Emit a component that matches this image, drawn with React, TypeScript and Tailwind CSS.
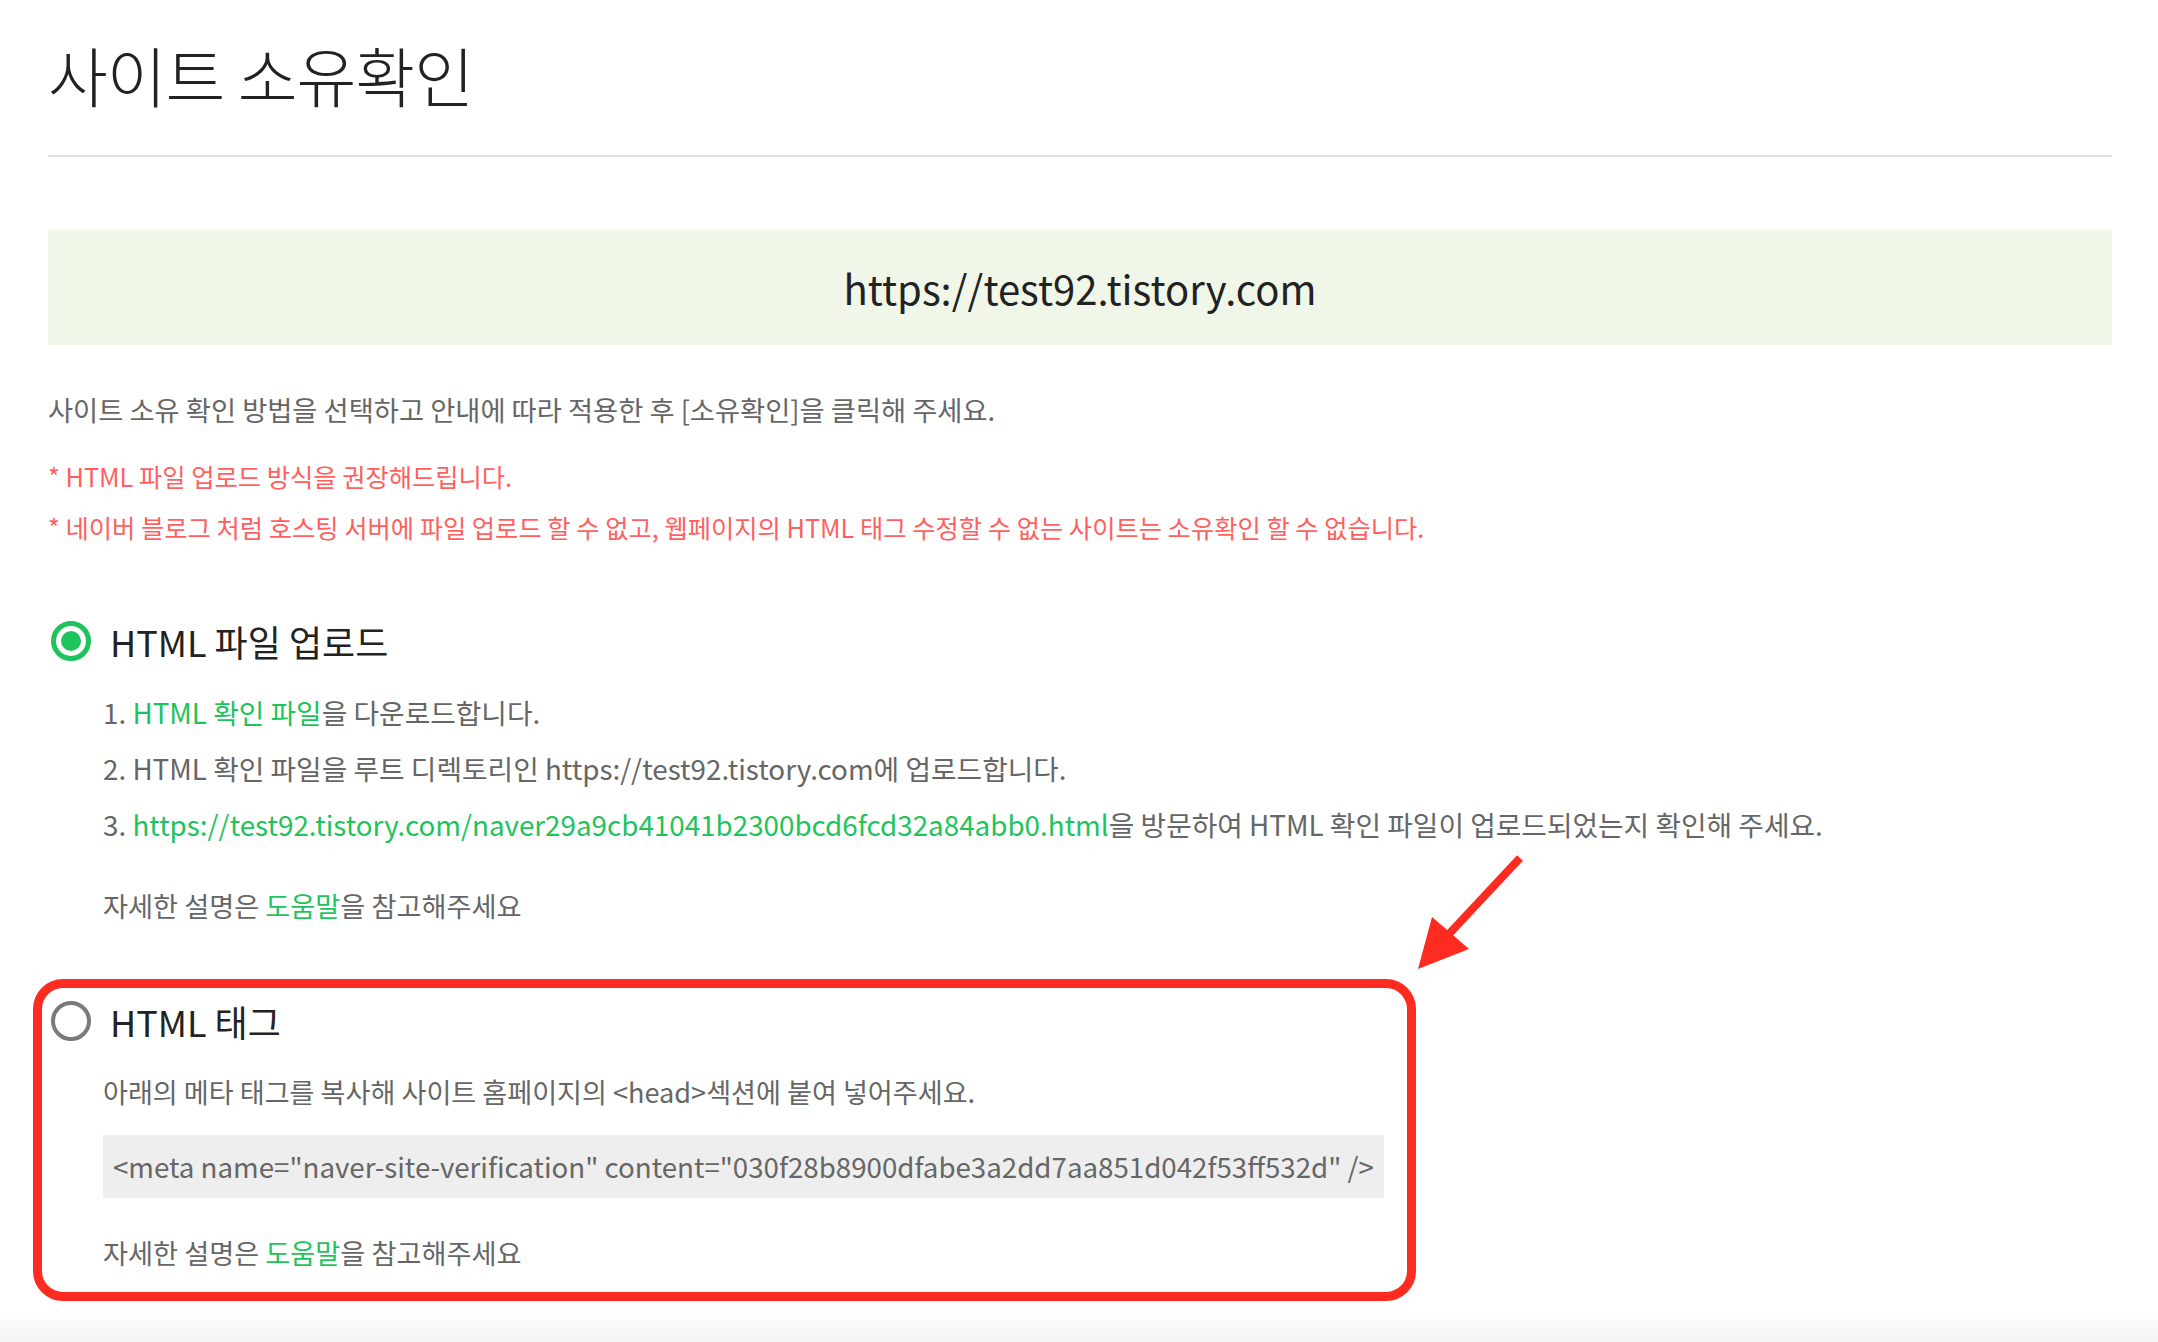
import React from 'react'

const font = { fontFamily: '"Noto Sans CJK KR", "Noto Sans", sans-serif' }

function Radio({ checked }: { checked?: boolean }) {
    if (checked) {
        return (
            <span className="flex h-[40px] w-[40px] shrink-0 items-center justify-center rounded-full border-[5px] border-[#1fc35c]">
                <span className="h-[20px] w-[20px] rounded-full bg-[#1fc35c]" />
            </span>
        )
    }
    return <span className="h-[40px] w-[40px] shrink-0 rounded-full border-[4px] border-[#7a7a7a]" />
}

function Help() {
    return (
        <p className="h-[40px] text-[27.2px] leading-[40px] text-[#666]">
            자세한 설명은 <span className="text-[#1fc35c]">도움말</span>을 참고해주세요
        </p>
    )
}

export default function App() {
    return (
        <div className="relative min-h-[1342px] bg-white" style={font}>
            <div className="px-[48px] pr-[46px]">
                <div className="border-b-2 border-[#e2e2e2] pt-[34px] pb-[41px]">
                    <h1 className="h-[80px] text-[65px] font-light leading-[80px] tracking-[-1px] text-[#222]">사이트 소유확인</h1>
                </div>

                <div className="mt-[73px] flex h-[115px] items-center justify-center bg-[#f0f7e8]">
                    <span className="text-[40px] text-[#222]">https://test92.tistory.com</span>
                </div>

                <p className="mt-[44px] h-[40px] text-[27.3px] leading-[40px] text-[#666]">
                    사이트 소유 확인 방법을 선택하고 안내에 따라 적용한 후 [소유확인]을 클릭해 주세요.
                </p>

                <div className="mt-[22px] text-[25.3px] leading-[51px] text-[#ff5f5f]">
                    <p>* HTML 파일 업로드 방식을 권장해드립니다.</p>
                    <p>* 네이버 블로그 처럼 호스팅 서버에 파일 업로드 할 수 없고, 웹페이지의 HTML 태그 수정할 수 없는 사이트는 소유확인 할 수 없습니다.</p>
                </div>

                <section className="mt-[63px]">
                    <div className="ml-[3px] flex h-[50px] items-center gap-[19px]">
                        <Radio checked />
                        <span className="text-[36px] text-[#222]">HTML 파일 업로드</span>
                    </div>
                    <ol className="mt-[18px] pl-[55px] text-[27.8px] leading-[56px] text-[#666]">
                        <li>
                            1. <span className="text-[#1fc35c]">HTML 확인 파일</span>을 다운로드합니다.
                        </li>
                        <li>2. HTML 확인 파일을 루트 디렉토리인 https://test92.tistory.com에 업로드합니다.</li>
                        <li>
                            3. <span className="text-[#1fc35c]">https://test92.tistory.com/naver29a9cb41041b2300bcd6fcd32a84abb0.html</span>을 방문하여 HTML 확인 파일이 업로드되었는지 확인해 주세요.
                        </li>
                    </ol>
                    <div className="mt-[33px] pl-[55px]">
                        <Help />
                    </div>
                </section>

                <section className="ml-[-15px] mt-[54px] w-[1383px] rounded-[30px] border-[9px] border-[#fd2b20] pt-[8px] pb-[20px] pl-[9px]">
                    <div className="flex h-[50px] items-center gap-[19px]">
                        <Radio />
                        <span className="text-[36px] text-[#222]">HTML 태그</span>
                    </div>
                    <div className="pl-[52px]">
                        <p className="mt-[26px] h-[40px] text-[27.1px] leading-[40px] text-[#666]">
                            아래의 메타 태그를 복사해 사이트 홈페이지의 &lt;head&gt;섹션에 붙여 넣어주세요.
                        </p>
                        <div className="mt-[23px] flex h-[63px] w-[1281px] items-center bg-[#eeeeee] pl-[10px] text-[27.7px] text-[#666]">
                            {'<meta name="naver-site-verification" content="030f28b8900dfabe3a2dd7aa851d042f53ff532d" />'}
                        </div>
                        <div className="mt-[34px]">
                            <Help />
                        </div>
                    </div>
                </section>
            </div>

            <div className="mt-[10px] h-[32px] bg-gradient-to-b from-white to-[#f4f4f4]" />

            <svg className="absolute left-[1400px] top-[840px]" width="140" height="150" viewBox="1400 840 140 150">
                <line x1="1520" y1="858" x2="1448" y2="935" stroke="#fd2b20" strokeWidth="8" />
                <polygon points="1418,969 1432,917 1469,949" fill="#fd2b20" />
            </svg>
        </div>
    )
}
